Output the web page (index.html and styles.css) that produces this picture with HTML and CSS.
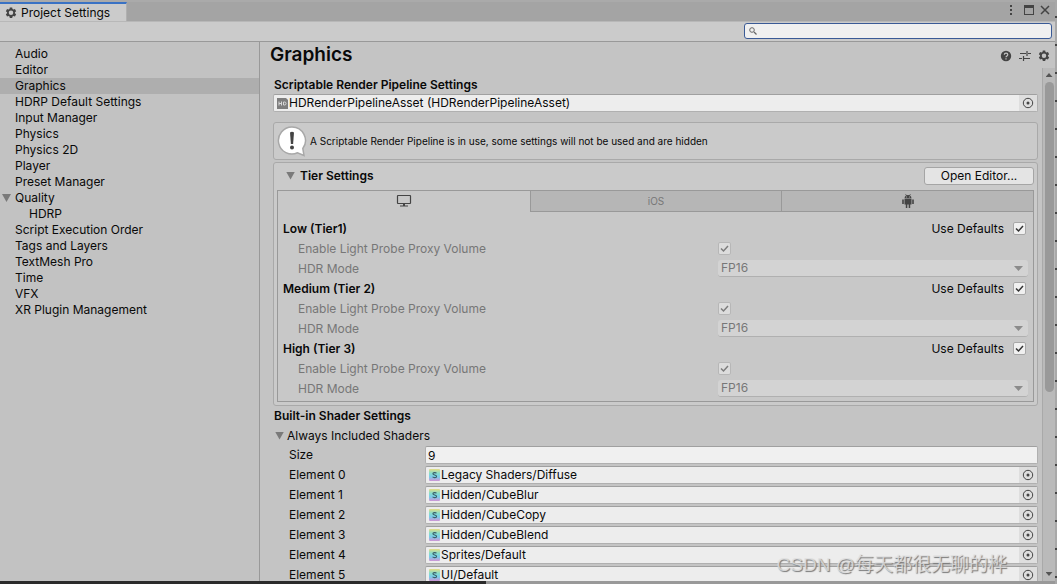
FILE: index.html
```html
<!DOCTYPE html>
<html lang="en">
<head>
    <meta charset="UTF-8">
    <meta name="viewport" content="width=device-width, initial-scale=1.0">
    <title>Project Settings</title>
    <link rel="stylesheet" href="styles.css">
</head>
<body>
    <!-- shared icons -->
    <svg class="sprite" aria-hidden="true">
        <symbol id="gear" viewBox="0 0 24 24">
            <path fill-rule="evenodd" d="M9.6 1h4.8l.6 3.1 1.9 1.1 3-1 2.4 4.1-2.4 2.1v2.2l2.4 2.1-2.4 4.1-3-1-1.9 1.1-.6 3.1H9.600l-.6-3.100-1.900-1.100-3 1-2.400-4.100 2.400-2.100v-2.200L1.700 8.300l2.400-4.100 3 1L9 4.100zM12 7a4.500 4.500 0 1 0 0 9 4.500 4.500 0 0 0 0-9z"/>
        </symbol>
        <symbol id="target" viewBox="0 0 12 12">
            <circle cx="6" cy="6" r="4.700" fill="none" stroke="#444" stroke-width="1"/>
            <circle cx="6" cy="6" r="1.500" fill="#444"/>
        </symbol>
        <symbol id="shader" viewBox="0 0 11 12">
            <rect x="0" y="0" width="11" height="12" rx="1" fill="url(#shader-fill)"/>
            <path d="M7.500 4.300C6.800 3.300 3.900 3.300 3.900 4.800c0 1.600 3.700.8 3.700 2.600 0 1.600-3.200 1.600-4 .4" fill="none" stroke="#3c5f6b" stroke-width="1.100"/>
        </symbol>
        <linearGradient id="shader-fill" x1="0" y1="0" x2="0" y2="1">
            <stop offset="0" stop-color="#e6dd86"/>
            <stop offset=".35" stop-color="#86dccb"/>
            <stop offset=".65" stop-color="#7accea"/>
            <stop offset="1" stop-color="#cf94d4"/>
        </linearGradient>
    </svg>

    <div class="window">
        <header class="titlebar">
            <div class="tab">
                <svg class="tab-icon"><use href="#gear"/></svg>
                <span>Project Settings</span>
            </div>
            <div class="window-buttons">
                <button aria-label="Menu"><svg viewBox="0 0 12 12"><path d="M5 1h2v2H5zM5 5h2v2H5zM5 9h2v2H5z"/></svg></button>
                <button aria-label="Maximize"><svg viewBox="0 0 12 12"><path fill-rule="evenodd" d="M1 1h10v10H1zM2 4v6h8V4z"/></svg></button>
                <button aria-label="Close"><svg viewBox="0 0 12 12"><path d="M2 2l8 8M10 2l-8 8" fill="none" stroke="#444" stroke-width="1.500"/></svg></button>
            </div>
        </header>

        <div class="toolbar">
            <input class="search" type="search" aria-label="Search settings">
        </div>

        <div class="main">
            <nav class="sidebar">
                <ul>
                    <li><a href="#">Audio</a></li>
                    <li><a href="#">Editor</a></li>
                    <li class="selected"><a href="#">Graphics</a></li>
                    <li><a href="#">HDRP Default Settings</a></li>
                    <li><a href="#">Input Manager</a></li>
                    <li><a href="#">Physics</a></li>
                    <li><a href="#">Physics 2D</a></li>
                    <li><a href="#">Player</a></li>
                    <li><a href="#">Preset Manager</a></li>
                    <li><button class="foldout" aria-label="Toggle Quality"></button><a href="#">Quality</a></li>
                    <li class="child"><a href="#">HDRP</a></li>
                    <li><a href="#">Script Execution Order</a></li>
                    <li><a href="#">Tags and Layers</a></li>
                    <li><a href="#">TextMesh Pro</a></li>
                    <li><a href="#">Time</a></li>
                    <li><a href="#">VFX</a></li>
                    <li><a href="#">XR Plugin Management</a></li>
                </ul>
            </nav>

            <main class="content">
                <div class="content-header">
                    <h1>Graphics</h1>
                    <div class="header-buttons">
                        <button aria-label="Help"><svg viewBox="0 0 12 12"><circle cx="6" cy="6" r="5.200"/><path d="M4.300 4.800c0-2.200 3.500-2.200 3.500 0C7.800 6 6 6 6 7.300M6 8.200v1.200" fill="none" stroke="#c4c4c4" stroke-width="1.200"/></svg></button>
                        <button aria-label="Presets"><svg viewBox="0 0 12 12"><path d="M1 3.500h6M9 3.500h3M8 1v5M0 8.500h3M5 8.500h6M4.500 6v5" fill="none" stroke="#444" stroke-width="1.200"/></svg></button>
                        <button aria-label="Options"><svg><use href="#gear"/></svg></button>
                    </div>
                </div>

                <div class="scroll-area">
                    <div class="panel">
                        <label class="heading" for="pipeline">Scriptable Render Pipeline Settings</label>
                        <div class="object-field">
                            <svg class="asset-icon" viewBox="0 0 11 12"><path d="M0 1h9l2 2v9H0z" fill="#7d7d7d"/><path d="M2 4.500v4M4.500 4.500v4M2 6.500h2.500M6.500 5h1.200q1.300 0 1.300 1.500T7.700 8H6.500z" fill="none" stroke="#d8d8d8"/></svg>
                            <input id="pipeline" type="text" value="HDRenderPipelineAsset (HDRenderPipelineAsset)" readonly>
                            <button aria-label="Select pipeline asset"><svg><use href="#target"/></svg></button>
                        </div>

                        <div class="help-box">
                            <svg viewBox="0 0 32 32"><path d="M16 2a13.500 13.500 0 1 0 5.500 25.800L28 30.500l-1.200-7A13.500 13.500 0 0 0 16 2z" fill="#fff" stroke="#a8a8a8" stroke-width="1.500"/><path d="M14 7.500q2-1.500 4 0l-.9 11.500h-2.200z" fill="#444"/><circle cx="16" cy="22.500" r="2" fill="#444"/></svg>
                            <p>A Scriptable Render Pipeline is in use, some settings will not be used and are hidden</p>
                        </div>

                        <section class="tier-settings">
                            <div class="tier-header">
                                <button class="foldout" aria-label="Toggle Tier Settings"></button>
                                <h2>Tier Settings</h2>
                                <button class="open-editor">Open Editor...</button>
                            </div>
                            <div class="platforms">
                                <div class="platform-tabs">
                                    <button class="active" aria-label="Standalone"><svg viewBox="0 0 16 14"><path d="M2 1.500h12q.5 0 .5.500v7q0 .5-.5.500H2q-.5 0-.5-.500V2q0-.5.500-.500z" fill="none" stroke="#444" stroke-width="1.200"/><path d="M7 10h2v1.500h3v1H4v-1h3z"/></svg></button>
                                    <button>iOS</button>
                                    <button aria-label="Android"><svg viewBox="0 0 14 14"><path d="M3.500 4.500Q3.500 2.300 5 1.500L4.300.3l.5-.3.800 1.200q1.400-.4 2.800 0L9.200 0l.5.300L9 1.500q1.500.8 1.500 3zM3.500 5h7v5.500H9.200V14H7.700v-3.500H6.300V14H4.800v-3.500H3.500zM1.200 5.500h1.600v4.500H1.200zM11.200 5.500h1.600v4.500h-1.600z"/><path d="M5.200 3h.8M8 3h.8" stroke="#b6b6b6"/></svg></button>
                                </div>
                                <div class="tiers">
                                    <div class="tier-row">
                                        <h3>Low (Tier1)</h3>
                                        <label for="defaults-1">Use Defaults</label>
                                        <input id="defaults-1" type="checkbox" checked>
                                    </div>
                                    <div class="property disabled">
                                        <label for="probe-1">Enable Light Probe Proxy Volume</label>
                                        <input id="probe-1" type="checkbox" checked disabled>
                                    </div>
                                    <div class="property disabled">
                                        <label for="hdr-1">HDR Mode</label>
                                        <div class="dropdown"><select id="hdr-1" disabled><option>FP16</option></select></div>
                                    </div>
                                    <div class="tier-row">
                                        <h3>Medium (Tier 2)</h3>
                                        <label for="defaults-2">Use Defaults</label>
                                        <input id="defaults-2" type="checkbox" checked>
                                    </div>
                                    <div class="property disabled">
                                        <label for="probe-2">Enable Light Probe Proxy Volume</label>
                                        <input id="probe-2" type="checkbox" checked disabled>
                                    </div>
                                    <div class="property disabled">
                                        <label for="hdr-2">HDR Mode</label>
                                        <div class="dropdown"><select id="hdr-2" disabled><option>FP16</option></select></div>
                                    </div>
                                    <div class="tier-row">
                                        <h3>High (Tier 3)</h3>
                                        <label for="defaults-3">Use Defaults</label>
                                        <input id="defaults-3" type="checkbox" checked>
                                    </div>
                                    <div class="property disabled">
                                        <label for="probe-3">Enable Light Probe Proxy Volume</label>
                                        <input id="probe-3" type="checkbox" checked disabled>
                                    </div>
                                    <div class="property disabled">
                                        <label for="hdr-3">HDR Mode</label>
                                        <div class="dropdown"><select id="hdr-3" disabled><option>FP16</option></select></div>
                                    </div>
                                </div>
                            </div>
                        </section>

                        <section class="shaders">
                            <h2>Built-in Shader Settings</h2>
                            <div class="shaders-title">
                                <button class="foldout" aria-label="Toggle Always Included Shaders"></button>
                                <span>Always Included Shaders</span>
                            </div>
                            <div class="shader-row">
                                <label for="size">Size</label>
                                <input class="text-field" id="size" type="text" value="9">
                            </div>
                            <div class="shader-row">
                                <label for="element-0">Element 0</label>
                                <div class="object-field">
                                    <svg class="asset-icon"><use href="#shader"/></svg>
                                    <input id="element-0" type="text" value="Legacy Shaders/Diffuse" readonly>
                                    <button aria-label="Select shader 0"><svg><use href="#target"/></svg></button>
                                </div>
                            </div>
                            <div class="shader-row">
                                <label for="element-1">Element 1</label>
                                <div class="object-field">
                                    <svg class="asset-icon"><use href="#shader"/></svg>
                                    <input id="element-1" type="text" value="Hidden/CubeBlur" readonly>
                                    <button aria-label="Select shader 1"><svg><use href="#target"/></svg></button>
                                </div>
                            </div>
                            <div class="shader-row">
                                <label for="element-2">Element 2</label>
                                <div class="object-field">
                                    <svg class="asset-icon"><use href="#shader"/></svg>
                                    <input id="element-2" type="text" value="Hidden/CubeCopy" readonly>
                                    <button aria-label="Select shader 2"><svg><use href="#target"/></svg></button>
                                </div>
                            </div>
                            <div class="shader-row">
                                <label for="element-3">Element 3</label>
                                <div class="object-field">
                                    <svg class="asset-icon"><use href="#shader"/></svg>
                                    <input id="element-3" type="text" value="Hidden/CubeBlend" readonly>
                                    <button aria-label="Select shader 3"><svg><use href="#target"/></svg></button>
                                </div>
                            </div>
                            <div class="shader-row">
                                <label for="element-4">Element 4</label>
                                <div class="object-field">
                                    <svg class="asset-icon"><use href="#shader"/></svg>
                                    <input id="element-4" type="text" value="Sprites/Default" readonly>
                                    <button aria-label="Select shader 4"><svg><use href="#target"/></svg></button>
                                </div>
                            </div>
                            <div class="shader-row">
                                <label for="element-5">Element 5</label>
                                <div class="object-field">
                                    <svg class="asset-icon"><use href="#shader"/></svg>
                                    <input id="element-5" type="text" value="UI/Default" readonly>
                                    <button aria-label="Select shader 5"><svg><use href="#target"/></svg></button>
                                </div>
                            </div>
                        </section>
                    </div>

                    <div class="scrollbar">
                        <span class="arrow-up"></span>
                        <div class="track"><div class="thumb"></div></div>
                        <span class="arrow-down"></span>
                    </div>
                </div>
            </main>
        </div>
    </div>

    <div class="watermark">CSDN @每天都很无聊的桦</div>
</body>
</html>
```
FILE: styles.css
```css
* {
    box-sizing: border-box;
}

body {
    margin: 0;
    height: 100vh;
    padding: 0 2px 3px 0;
    overflow: hidden;
    /* editor windows showing behind the dialog */
    background:
        repeating-linear-gradient(to bottom, #a8a8a8 0 16px, #444 16px 18px, #a8a8a8 18px 28px) right top / 2px 100% no-repeat,
        linear-gradient(to right, #2b2b2b 46%, #999 46%);
    font-family: Inter, "Liberation Sans", sans-serif;
    font-size: 12px;
    line-height: 16px;
    color: #090909;
}

h1, h2, h3, p, ul {
    margin: 0;
    padding: 0;
}

h2, h3 {
    font-size: 12px;
    font-weight: 600;
}

a {
    color: inherit;
    text-decoration: none;
}

button, input, select {
    font: inherit;
    color: inherit;
    margin: 0;
    padding: 0;
    border: none;
    background: none;
}

svg {
    display: block;
    fill: #444;
}

.sprite {
    position: absolute;
    width: 0;
    height: 0;
}

.window {
    display: flex;
    flex-direction: column;
    height: 100%;
    background: #c4c4c4;
}

.titlebar {
    display: flex;
    justify-content: space-between;
    height: 21px;
    background: #a4a4a4;
    border-top: 2px solid #aaa;
}

.tab {
    display: flex;
    align-items: center;
    gap: 4px;
    padding: 0 16px 0 5px;
    border-top: 2px solid #3a72c4;
    border-right: 1px solid #b0b0b0;
    background: #cbcbcb;
}

.tab-icon {
    width: 12px;
    height: 12px;
}

.window-buttons {
    display: flex;
    align-items: center;
    gap: 4px;
    padding: 0 4px 4px 0;
}

.window-buttons button:first-child {
    margin-right: 2px;
}

.window-buttons svg,
.header-buttons svg {
    width: 12px;
    height: 12px;
}

.toolbar {
    display: flex;
    justify-content: flex-end;
    align-items: flex-start;
    height: 21px;
    padding: 1px 3px 0 0;
    background: #cbcbcb;
    border-top: 1px solid #b8b8b8;
    border-bottom: 1px solid #999;
}

.search {
    width: 308px;
    height: 16px;
    padding-left: 18px;
    border: 1px solid #3a5a96;
    border-radius: 3px;
    outline: none;
    background: #f0f0f0 url('data:image/svg+xml,<svg xmlns="http://www.w3.org/2000/svg" width="8" height="8" fill="none" stroke="%23666"><circle cx="3" cy="3" r="2.300"/><path d="M5 5l2.500 2.500" stroke-width="1.300"/></svg>') no-repeat 4px center;
}

.main {
    display: flex;
    flex: 1;
    min-height: 0;
}

.sidebar {
    width: 260px;
    padding-top: 4px;
    border-right: 1px solid #999;
    background: #c2c2c2;
}

.sidebar li {
    display: flex;
    align-items: center;
    height: 16px;
    padding-left: 2px;
}

.sidebar a {
    flex: 1;
    padding-left: 13px;
}

.sidebar .foldout + a {
    padding-left: 4px;
}

.sidebar .child {
    padding-left: 16px;
}

.sidebar .selected {
    background: #aeaeae;
}

.foldout {
    width: 9px;
    height: 8px;
    background: #7a7a7a;
    clip-path: polygon(0 0, 100% 0, 50% 100%);
}

.content {
    display: flex;
    flex: 1;
    flex-direction: column;
    min-width: 0;
}

.content-header {
    display: flex;
    justify-content: space-between;
    align-items: center;
    height: 26px;
    padding: 0 5px 0 10px;
}

h1 {
    font-size: 19px;
    font-weight: 600;
    line-height: 24px;
}

.header-buttons {
    display: flex;
    gap: 7px;
    padding-top: 2px;
}

.scroll-area {
    display: flex;
    flex: 1;
    min-height: 0;
}

.panel {
    flex: 1;
    min-width: 0;
    padding: 8px 4px 0 13px;
    overflow: hidden;
}

.heading {
    display: block;
    height: 18px;
    padding-left: 1px;
    line-height: 18px;
    font-weight: 600;
}

.object-field,
.text-field {
    height: 18px;
    border: 1px solid #b0b0b0;
    border-top-color: #a0a0a0;
    border-radius: 2px;
    background: #ededed;
}

.object-field {
    display: flex;
    align-items: center;
    padding-left: 3px;
    overflow: hidden;
}

.object-field input {
    flex: 1;
    min-width: 0;
    padding-left: 1px;
    outline: none;
}

.object-field button {
    display: flex;
    justify-content: center;
    align-items: center;
    width: 18px;
    height: 16px;
    background: #dedede;
}

.object-field button svg {
    width: 12px;
    height: 12px;
}

.asset-icon {
    width: 11px;
    height: 12px;
}

.help-box {
    display: flex;
    align-items: center;
    gap: 2px;
    height: 38px;
    margin-top: 10px;
    padding-left: 2px;
    border: 1px solid #a9a9a9;
    border-radius: 3px;
    background: #cacaca;
    font-size: 10px;
}

.help-box svg {
    width: 32px;
    height: 32px;
}

.tier-settings {
    margin-top: 2px;
    padding: 0 3px 3px;
    border: 1px solid #a9a9a9;
    border-radius: 3px;
    background: #cacaca;
}

.tier-header {
    display: flex;
    align-items: center;
    height: 27px;
    padding: 0 0 2px 9px;
}

.tier-header h2 {
    flex: 1;
    padding-left: 5px;
}

.open-editor {
    width: 110px;
    height: 18px;
    border: 1px solid #a5a5a5;
    border-radius: 3px;
    background: #e4e4e4;
}

.platforms {
    border: 1px solid #999;
    background: #c8c8c8;
}

.platform-tabs {
    display: grid;
    grid-template-columns: repeat(3, 1fr);
    height: 21px;
}

.platform-tabs button {
    display: flex;
    justify-content: center;
    align-items: center;
    border-left: 1px solid #999;
    border-bottom: 1px solid #999;
    background: #b6b6b6;
    color: #777;
    font-size: 10px;
}

.platform-tabs .active {
    border-color: transparent;
    background: #c8c8c8;
}

.platform-tabs svg {
    width: 16px;
    height: 14px;
}

.tiers {
    padding: 7px 5px 2px;
}

.tier-row {
    display: flex;
    align-items: center;
    height: 20px;
    padding-right: 2px;
}

.tier-row h3 {
    flex: 1;
}

.tier-row input {
    margin-left: 9px;
}

input[type="checkbox"] {
    appearance: none;
    width: 13px;
    height: 13px;
    margin-bottom: 2px;
    border: 1px solid #a8a8a8;
    border-radius: 2px;
    background: #f0f0f0 url('data:image/svg+xml,<svg xmlns="http://www.w3.org/2000/svg" width="11" height="11" fill="none" stroke="%23333" stroke-width="1.500"><path d="M2 5.500l2.500 2.500 4.500-5"/></svg>') no-repeat center;
}

.property {
    display: grid;
    grid-template-columns: 42fr 31fr;
    align-items: center;
    height: 20px;
    padding-left: 15px;
}

.disabled {
    color: #777;
}

.disabled input[type="checkbox"] {
    opacity: 0.5;
}

.dropdown {
    position: relative;
}

.dropdown::after {
    content: "";
    position: absolute;
    top: 6px;
    right: 5px;
    width: 9px;
    height: 5px;
    background: #8c8c8c;
    clip-path: polygon(0 0, 100% 0, 50% 100%);
}

.dropdown select {
    appearance: none;
    display: block;
    width: 100%;
    height: 17px;
    margin-bottom: 1px;
    padding-left: 3px;
    border-bottom: 1px solid #b0b0b0;
    border-radius: 3px;
    background: #d3d3d3;
    opacity: 1;
}

.shaders {
    padding-left: 1px;
}

.shaders h2 {
    line-height: 20px;
}

.shaders-title {
    display: flex;
    align-items: center;
    gap: 3px;
    height: 19px;
    padding-left: 1px;
}

.shader-row {
    display: flex;
    align-items: center;
    height: 20px;
    padding-left: 15px;
}

.shader-row label {
    width: 136px;
}

.shader-row .object-field,
.shader-row .text-field {
    flex: 1;
    min-width: 0;
}

.text-field {
    padding-left: 2px;
    background: #f0f0f0;
}

.scrollbar {
    display: flex;
    flex-direction: column;
    align-items: center;
    width: 13px;
    padding: 5px 0;
    border-left: 1px solid #a9a9a9;
    background: #bababa;
}

.arrow-up,
.arrow-down {
    width: 7px;
    height: 4px;
    background: #555;
    clip-path: polygon(50% 0, 100% 100%, 0 100%);
}

.arrow-down {
    clip-path: polygon(0 0, 100% 0, 50% 100%);
}

.track {
    flex: 1;
    width: 9px;
    margin: 5px 0;
}

.thumb {
    height: 64%;
    border-radius: 5px;
    background: #999;
}

.watermark {
    position: absolute;
    right: 50px;
    bottom: 7px;
    font-family: "Liberation Sans", "Noto Sans CJK SC", sans-serif;
    font-size: 19px;
    line-height: 24px;
    color: rgba(225, 225, 225, 0.8);
    text-shadow: 1px 1px 1px #777;
}
```
